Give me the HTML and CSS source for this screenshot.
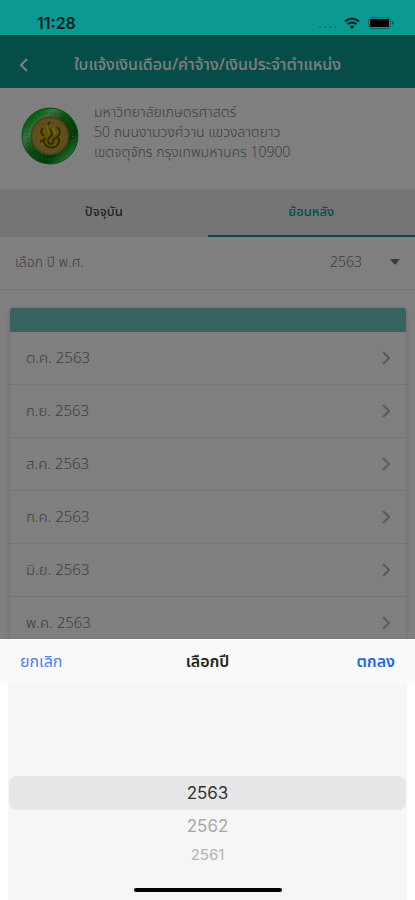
FILE: index.html
```
<!DOCTYPE html>
<html lang="th">
<head>
<meta charset="utf-8">
<meta name="viewport" content="width=device-width, initial-scale=1">
<title>ใบแจ้งเงินเดือน</title>
<link rel="stylesheet" href="styles.css">
</head>
<body>
<div class="status-bar">
<span class="clock">11:28</span>
<div class="status-icons">
<svg width="18" height="4" viewBox="0 0 18 4" fill="#08756f"><circle cx="2" cy="2" r="1"/><circle cx="7" cy="2" r="1"/><circle cx="12" cy="2" r="1"/><circle cx="17" cy="2" r="1"/></svg>
<svg width="16" height="12" viewBox="0 0 16 12" fill="none" stroke="#04211f" stroke-width="2"><path d="M1 4.500a10 10 0 0 1 14 0M3.600 7.300a6.300 6.300 0 0 1 8.800 0"/><path d="M8 12L5.600 9.600a3.400 3.400 0 0 1 4.800 0z" fill="#04211f" stroke="none"/></svg>
<svg width="26" height="12" viewBox="0 0 26 12"><rect x="0.500" y="0.500" width="22" height="11" rx="3" fill="none" stroke="#08665f"/><rect x="2" y="2" width="19" height="8" rx="1" fill="#000"/><path d="M24 4v4c1.300-.5 2-1.200 2-2s-.7-1.500-2-2z" fill="#08665f"/></svg>
</div>
</div>
<div class="screen">
<header class="navbar">
<button class="back" aria-label="ย้อนกลับ"><svg width="10" height="16" viewBox="0 0 10 16"><path d="M8 2L2 8l6 6" fill="none" stroke="currentColor" stroke-width="2"/></svg></button>
<h1>ใบแจ้งเงินเดือน/ค่าจ้าง/เงินประจำตำแหน่ง</h1>
</header>
<section class="organization">
<svg class="seal" viewBox="0 0 58 58">
<defs>
<linearGradient id="ring" x1="0" y1="0" x2="1" y2="1">
<stop offset="0" stop-color="#008f16"/><stop offset="0.180" stop-color="#08c32b"/><stop offset="0.300" stop-color="#76e888"/><stop offset="0.450" stop-color="#159b20"/><stop offset="0.700" stop-color="#007512"/><stop offset="0.850" stop-color="#42db57"/><stop offset="1" stop-color="#009f1b"/>
</linearGradient>
<radialGradient id="gold"><stop offset="0" stop-color="#c5a000"/><stop offset="0.600" stop-color="#c7a729"/><stop offset="1" stop-color="#a58d4b"/></radialGradient>
</defs>
<circle cx="29" cy="29" r="28" fill="url(#ring)" stroke="#178f28"/>
<circle cx="29" cy="29" r="23" fill="none" stroke="#758c18" stroke-width="2" stroke-dasharray="1 3"/>
<circle cx="29" cy="29" r="19" fill="url(#gold)" stroke="#867020"/>
<circle cx="29" cy="29" r="16" fill="none" stroke="#d0bb70" stroke-dasharray="2 2"/>
<path d="M29 15c-3 3-3 5 0 8s2 6-1 8M22 21c-3 3-2 6 1 8M36 20c4 4 4 7 0 10M19 35l6-4M23 32c-2 9 13 12 15 3 1-4-3-6-5-3s0 5-3 5-4-3-2-6" fill="none" stroke="#685100" stroke-width="2"/>
<path d="M27 18c-2 4 2 5 1 9M32 21l2 6" fill="none" stroke="#e8c619" stroke-width="2"/>
</svg>
<address>มหาวิทยาลัยเกษตรศาสตร์<br>50 ถนนงามวงศ์วาน แขวงลาดยาว<br>เขตจตุจักร กรุงเทพมหานคร 10900</address>
</section>
<nav class="tabs">
<button>ปัจจุบัน</button>
<button class="active">ย้อนหลัง</button>
</nav>
<div class="year-row">
<label for="year">เลือก ปี พ.ศ.</label>
<div class="year-select">
<select id="year"><option>2563</option><option>2562</option><option>2561</option></select>
<svg width="10" height="6" viewBox="0 0 10 6"><path d="M0 0h10L5 6z" fill="#757575"/></svg>
</div>
</div>
<main class="slips">
<div class="slips-head"></div>
<a href="#">ต.ค. 2563<svg class="chevron" viewBox="0 0 8 14"><path d="M1 1l6 6-6 6"/></svg></a>
<a href="#">ก.ย. 2563<svg class="chevron" viewBox="0 0 8 14"><path d="M1 1l6 6-6 6"/></svg></a>
<a href="#">ส.ค. 2563<svg class="chevron" viewBox="0 0 8 14"><path d="M1 1l6 6-6 6"/></svg></a>
<a href="#">ก.ค. 2563<svg class="chevron" viewBox="0 0 8 14"><path d="M1 1l6 6-6 6"/></svg></a>
<a href="#">มิ.ย. 2563<svg class="chevron" viewBox="0 0 8 14"><path d="M1 1l6 6-6 6"/></svg></a>
<a href="#">พ.ค. 2563<svg class="chevron" viewBox="0 0 8 14"><path d="M1 1l6 6-6 6"/></svg></a>
</main>
<div class="backdrop"></div>
</div>
<div class="sheet" role="dialog" aria-labelledby="sheetTitle">
<div class="sheet-bar">
<button class="cancel">ยกเลิก</button>
<h2 id="sheetTitle">เลือกปี</h2>
<button class="confirm">ตกลง</button>
</div>
<div class="picker">
<button class="selected">2563</button>
<button class="near">2562</button>
<button class="far">2561</button>
<div class="home-indicator"></div>
</div>
</div>
</body>
</html>
```
FILE: styles.css
```
* {
  box-sizing: border-box;
}

body {
  margin: 0;
  height: 100vh;
  display: flex;
  flex-direction: column;
  overflow: hidden;
  font-family: "Noto Sans Thai", "Noto Sans", sans-serif;
  color: #7c7c7c;
  background: #fff;
}

button {
  padding: 0;
  border: none;
  background: none;
  font: inherit;
  color: inherit;
  cursor: pointer;
}

/* Status bar */
.status-bar {
  flex: none;
  display: flex;
  justify-content: space-between;
  align-items: center;
  height: 35px;
  padding: 11px 21px 0 37px;
  background: #0c9992;
}

.clock {
  font: 600 16px/20px Inter, sans-serif;
  color: #04211f;
}

.status-icons {
  display: flex;
  align-items: center;
  gap: 8px;
}

.status-icons svg:first-child {
  align-self: flex-end;
}

/* Page behind the sheet */
.screen {
  position: relative;
  flex: 1;
  min-height: 0;
  overflow: hidden;
}

.backdrop {
  position: absolute;
  inset: 0;
  background: rgba(0, 0, 0, 0.5);
}

.navbar {
  display: grid;
  grid-template-columns: 48px 1fr 48px;
  align-items: center;
  height: 53px;
  padding-top: 6px;
  background: #0c9992;
  color: #fff;
}

.back {
  height: 40px;
}

.back svg {
  display: block;
  margin: 0 auto;
}

h1 {
  margin: 0;
  font-size: 16px;
  font-weight: 500;
  line-height: 28px;
  text-align: center;
  white-space: nowrap;
}

.organization {
  display: flex;
  gap: 15px;
  height: 101px;
  padding: 15px 21px;
}

.seal {
  flex: none;
  width: 58px;
  height: 58px;
  margin-top: 4px;
}

address {
  font-size: 14px;
  font-style: normal;
  font-weight: 300;
  line-height: 20px;
  white-space: nowrap;
}

.tabs {
  display: grid;
  grid-template-columns: 1fr 1fr;
  height: 48px;
  background: #eaeaea;
  font-size: 13px;
  font-weight: 500;
}

.tabs button {
  border-bottom: 2px solid transparent;
  color: #444;
}

.tabs .active {
  border-color: #0c9992;
  color: #0c9992;
}

.year-row {
  display: flex;
  justify-content: space-between;
  align-items: center;
  height: 53px;
  padding: 0 15px 2px;
  border-bottom: 1px solid #e8e8e8;
  font-size: 14px;
  font-weight: 300;
}

.year-select {
  display: flex;
  align-items: center;
  gap: 28px;
}

select {
  appearance: none;
  padding: 0;
  border: none;
  background: none;
  font: inherit;
  color: inherit;
}

.slips {
  margin: 18px 9px 0 10px;
  border-radius: 3px;
  box-shadow: 0 1px 4px rgba(0, 0, 0, 0.2);
  overflow: hidden;
}

.slips-head {
  height: 24px;
  background: #70c5c0;
}

.slips a {
  display: flex;
  justify-content: space-between;
  align-items: center;
  height: 53px;
  padding: 0 16px;
  border-bottom: 1px solid #e8e8e8;
  font-size: 15px;
  font-weight: 300;
  color: inherit;
  text-decoration: none;
}

.chevron {
  width: 8px;
  height: 14px;
  fill: none;
  stroke: #b4b4b4;
  stroke-width: 2;
}

/* Year picker sheet */
.sheet {
  position: fixed;
  right: 0;
  bottom: 0;
  left: 0;
  background: #fff;
}

.sheet-bar {
  display: grid;
  grid-template-columns: 1fr 1fr 1fr;
  align-items: center;
  height: 45px;
  padding: 0 20px;
  background: #fafafa;
  font-size: 16px;
}

.cancel {
  justify-self: start;
  color: #4585ee;
}

.confirm {
  justify-self: end;
  font-weight: 600;
  color: #1769ec;
}

h2 {
  margin: 0;
  font-size: 16px;
  font-weight: 600;
  text-align: center;
  color: #222;
}

.picker {
  display: flex;
  flex-direction: column;
  height: 216px;
  margin: 0 8px;
  padding: 92px 1px 8px;
  background: #f6f6f6;
  font-family: Inter, sans-serif;
  font-size: 17px;
}

.picker .selected {
  height: 34px;
  border-radius: 8px;
  background: #e7e7e7;
  color: #333;
}

.picker .near {
  height: 32px;
  color: #a8a8a8;
}

.picker .far {
  height: 24px;
  font-size: 15px;
  color: #b4b4b4;
}

.home-indicator {
  width: 148px;
  height: 4px;
  margin: auto auto 0;
  border-radius: 2px;
  background: #000;
}
```
